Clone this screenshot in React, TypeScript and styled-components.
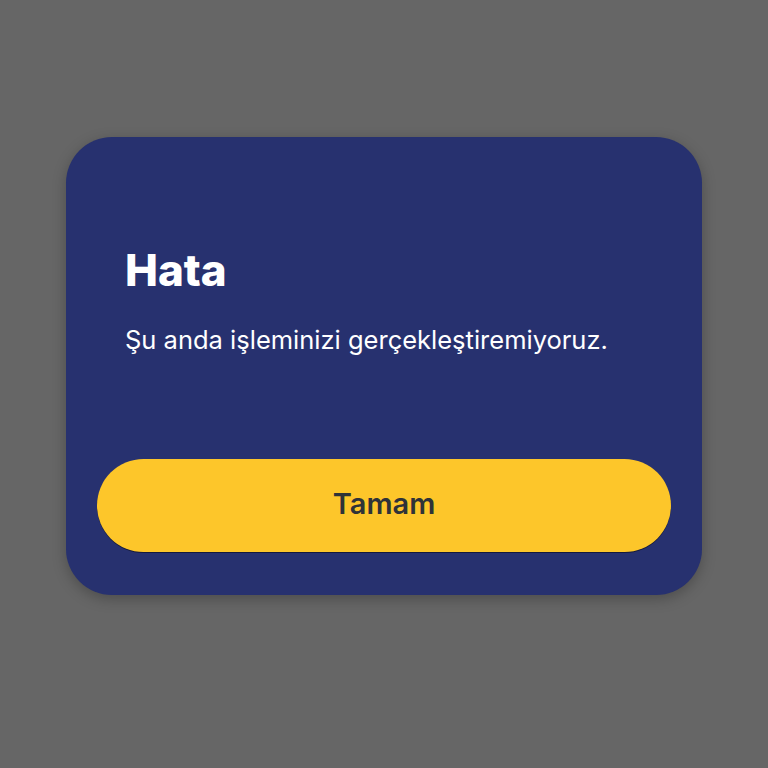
import React from "react";
import styled, { createGlobalStyle } from "styled-components";

const Global = createGlobalStyle`
  html, body {
    margin: 0;
    padding: 0;
    background: #666666;
    font-family: Inter, "Noto Sans", sans-serif;
  }
`;

const Screen = styled.div`
  width: 768px;
  height: 768px;
  display: flex;
  justify-content: center;
  align-items: flex-start;
  padding-top: 137px;
  box-sizing: border-box;
`;

const Dialog = styled.div`
  width: 636px;
  height: 458px;
  box-sizing: border-box;
  background: #27316f;
  border-radius: 46px;
  box-shadow: 0 4px 14px rgba(0, 0, 0, 0.25);
  display: flex;
  flex-direction: column;
  padding: 0 31px 43px;
`;

const Body = styled.div`
  flex: 1;
  padding: 107px 28px 0;
`;

const Title = styled.h1`
  margin: 0;
  color: #ffffff;
  font-size: 44px;
  line-height: 52px;
  font-weight: 800;
`;

const Message = styled.p`
  margin: 28px 0 0;
  color: #ffffff;
  font-size: 25.5px;
  line-height: 32px;
  font-weight: 400;
`;

const Button = styled.button`
  height: 93px;
  width: 100%;
  border: none;
  border-radius: 47px;
  background: #fdc62a;
  box-shadow: 0 1px 0 rgba(0, 0, 0, 0.45);
  color: #2f3338;
  font-family: Inter, "Noto Sans", sans-serif;
  font-size: 29px;
  font-weight: 600;
  padding: 0 0 5px;
  cursor: pointer;
`;

export default function App() {
  return (
    <>
      <Global />
      <Screen>
        <Dialog>
          <Body>
            <Title>Hata</Title>
            <Message>Şu anda işleminizi gerçekleştiremiyoruz.</Message>
          </Body>
          <Button>Tamam</Button>
        </Dialog>
      </Screen>
    </>
  );
}
